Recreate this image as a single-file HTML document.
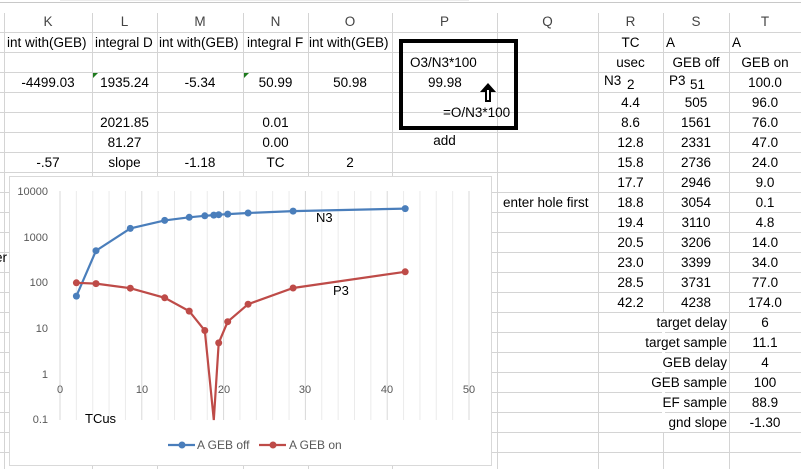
<!DOCTYPE html>
<html><head><meta charset="utf-8"><style>
*{margin:0;padding:0;box-sizing:border-box}
body{width:801px;height:469px;overflow:hidden;background:#fff;font-family:"Liberation Sans",sans-serif;font-size:13.5px;color:#000;position:relative}
.t{position:absolute;white-space:nowrap;line-height:20px;height:20px}
.c{text-align:center}.r{text-align:right}
.h{color:#444}
.vl{position:absolute;width:1px;background:#d4d4d4}
.hl{position:absolute;height:1px;background:#d4d4d4}
</style></head><body>
<div id="g"></div>
<div class="hl" style="left:0;top:2px;width:801px;background:#c8c8c8"></div>
<script>
var g=document.getElementById('g'),h='';
var cols=[4,92,157,243,308,392,497,598,663,729];
for(var i=0;i<cols.length;i++){h+='<div class="vl" style="left:'+cols[i]+'px;top:13px;height:456px"></div>';}
for(var y=32;y<469;y+=20){h+='<div class="hl" style="left:0;top:'+y+'px;width:801px"></div>';}
h+='<div style="position:absolute;left:662px;top:313px;width:3px;height:119px;background:#fff"></div>';
g.innerHTML=h;
</script>
<div class="t c h" style="left:4px;top:12px;width:88px">K</div>
<div class="t c h" style="left:92px;top:12px;width:65px">L</div>
<div class="t c h" style="left:157px;top:12px;width:86px">M</div>
<div class="t c h" style="left:243px;top:12px;width:65px">N</div>
<div class="t c h" style="left:308px;top:12px;width:84px">O</div>
<div class="t c h" style="left:392px;top:12px;width:105px">P</div>
<div class="t c h" style="left:497px;top:12px;width:101px">Q</div>
<div class="t c h" style="left:598px;top:12px;width:65px">R</div>
<div class="t c h" style="left:663px;top:12px;width:66px">S</div>
<div class="t c h" style="left:729px;top:12px;width:72px">T</div>
<div class="t" style="left:7px;top:33px">int with(GEB)</div>
<div class="t" style="left:95px;top:33px">integral D</div>
<div class="t" style="left:159px;top:33px">int with(GEB)</div>
<div class="t" style="left:247px;top:33px">integral F</div>
<div class="t" style="left:309px;top:33px">int with(GEB)</div>
<div class="t c" style="left:598px;top:33px;width:65px">TC</div>
<div class="t" style="left:666px;top:33px">A</div>
<div class="t" style="left:732px;top:33px">A</div>
<div class="t c" style="left:598px;top:53px;width:65px">usec</div>
<div class="t c" style="left:663px;top:53px;width:66px">GEB off</div>
<div class="t c" style="left:729px;top:53px;width:72px">GEB on</div>
<div class="t c" style="left:4px;top:73px;width:88px">-4499.03</div>
<div class="t c" style="left:92px;top:73px;width:65px">1935.24</div>
<div class="t c" style="left:157px;top:73px;width:86px">-5.34</div>
<div class="t c" style="left:243px;top:73px;width:65px">50.99</div>
<div class="t c" style="left:308px;top:73px;width:84px">50.98</div>
<div style="position:absolute;left:93px;top:73px;width:0;height:0;border-top:5px solid #1e7b1e;border-right:5px solid transparent"></div>
<div style="position:absolute;left:244px;top:73px;width:0;height:0;border-top:5px solid #1e7b1e;border-right:5px solid transparent"></div>
<div class="t c" style="left:92px;top:113px;width:65px">2021.85</div>
<div class="t c" style="left:243px;top:113px;width:65px">0.01</div>
<div class="t c" style="left:92px;top:133px;width:65px">81.27</div>
<div class="t c" style="left:243px;top:133px;width:65px">0.00</div>
<div class="t c" style="left:4px;top:153px;width:88px">-.57</div>
<div class="t c" style="left:92px;top:153px;width:65px">slope</div>
<div class="t c" style="left:157px;top:153px;width:86px">-1.18</div>
<div class="t c" style="left:243px;top:153px;width:65px">TC</div>
<div class="t c" style="left:308px;top:153px;width:84px">2</div>
<div style="position:absolute;left:399px;top:39px;width:119px;height:91px;border:4px solid #000"></div>
<div class="t" style="left:410px;top:53px">O3/N3*100</div>
<div class="t" style="left:428px;top:73px">99.98</div>
<div class="t" style="left:443px;top:103px">=O/N3*100</div>
<svg style="position:absolute;left:478px;top:82px" width="20" height="22" viewBox="0 0 20 22"><path d="M10 1 L18 10 L13 10 L13 20 L7 20 L7 10 L2 10 Z" fill="#000"/><path d="M9 8 L11 8 L11 18 L9 18 Z" fill="#fff"/></svg>
<div class="t c" style="left:392px;top:131px;width:105px">add</div>
<div id="d"></div>
<script>
var R=[["","","100.0"],["4.4","505","96.0"],["8.6","1561","76.0"],["12.8","2331","47.0"],["15.8","2736","24.0"],["17.7","2946","9.0"],["18.8","3054","0.1"],["19.4","3110","4.8"],["20.5","3206","14.0"],["23.0","3399","34.0"],["28.5","3731","77.0"],["42.2","4238","174.0"]];
var s='';
for(var i=0;i<R.length;i++){var y=73+20*i;
s+='<div class="t c" style="left:598px;top:'+y+'px;width:65px">'+R[i][0]+'</div>';
s+='<div class="t c" style="left:663px;top:'+y+'px;width:66px">'+R[i][1]+'</div>';
s+='<div class="t c" style="left:729px;top:'+y+'px;width:72px">'+R[i][2]+'</div>';}
var B=[["target delay","6"],["target sample","11.1"],["GEB delay","4"],["GEB sample","100"],["EF sample","88.9"],["gnd slope","-1.30"]];
for(var i=0;i<B.length;i++){var y=313+20*i;
s+='<div class="t r" style="left:598px;top:'+y+'px;width:129px">'+B[i][0]+'</div>';
s+='<div class="t c" style="left:729px;top:'+y+'px;width:72px">'+B[i][1]+'</div>';}
document.getElementById('d').innerHTML=s;
</script>
<div class="t" style="left:604px;top:71px">N3</div>
<div class="t" style="left:627px;top:75px">2</div>
<div class="t" style="left:669px;top:71px">P3</div>
<div class="t" style="left:690px;top:75px">51</div>
<div class="t" style="left:503px;top:193px">enter hole first</div>
<div class="t" style="left:-5px;top:248px">er</div>
<svg style="position:absolute;left:0;top:0" width="801" height="469">
<rect x="9.5" y="176.5" width="482" height="289" fill="#fff" stroke="#d9d9d9"/>
<g id="grid"></g>
<g font-family="Liberation Sans" font-size="11" fill="#595959" text-anchor="end">
<text x="48" y="195">10000</text><text x="48" y="241">1000</text><text x="48" y="286">100</text><text x="48" y="332">10</text><text x="48" y="378">1</text><text x="48" y="423">0.1</text>
</g>
<g font-family="Liberation Sans" font-size="11" fill="#595959" text-anchor="middle">
<text x="60" y="393">0</text><text x="142" y="393">10</text><text x="224" y="393">20</text><text x="305" y="393">30</text><text x="387" y="393">40</text><text x="469" y="393">50</text>
</g>
<polyline fill="none" stroke="#4a7ebb" stroke-width="2.2" points="76.4,296.1 96,250.7 130.3,228.4 164.7,220.4 189.2,217.3 204.8,215.8 213.8,215.1 218.7,214.7 227.7,214.1 248.1,213 293.1,211.1 405.2,208.6"/>
<g fill="#4a7ebb"><circle cx="76.4" cy="296.1" r="3.5"/><circle cx="96" cy="250.7" r="3.5"/><circle cx="130.3" cy="228.4" r="3.5"/><circle cx="164.7" cy="220.4" r="3.5"/><circle cx="189.2" cy="217.3" r="3.5"/><circle cx="204.8" cy="215.8" r="3.5"/><circle cx="213.8" cy="215.1" r="3.5"/><circle cx="218.7" cy="214.7" r="3.5"/><circle cx="227.7" cy="214.1" r="3.5"/><circle cx="248.1" cy="213" r="3.5"/><circle cx="293.1" cy="211.1" r="3.5"/><circle cx="405.2" cy="208.6" r="3.5"/></g>
<polyline fill="none" stroke="#be4b48" stroke-width="2.2" points="76.4,282.8 96,283.6 130.3,288.2 164.7,297.8 189.2,311.1 204.8,330.5 213.8,420 218.7,342.9 227.7,321.7 248.1,304.2 293.1,288 405.2,271.8"/>
<g fill="#be4b48"><circle cx="76.4" cy="282.8" r="3.5"/><circle cx="96" cy="283.6" r="3.5"/><circle cx="130.3" cy="288.2" r="3.5"/><circle cx="164.7" cy="297.8" r="3.5"/><circle cx="189.2" cy="311.1" r="3.5"/><circle cx="204.8" cy="330.5" r="3.5"/><circle cx="218.7" cy="342.9" r="3.5"/><circle cx="227.7" cy="321.7" r="3.5"/><circle cx="248.1" cy="304.2" r="3.5"/><circle cx="293.1" cy="288" r="3.5"/><circle cx="405.2" cy="271.8" r="3.5"/></g>
<g font-family="Liberation Sans" font-size="13" fill="#000">
<text x="316" y="222">N3</text><text x="333" y="295">P3</text><text x="85" y="423">TCus</text>
</g>
<line x1="168" y1="445" x2="195" y2="445" stroke="#4a7ebb" stroke-width="2.2"/><circle cx="182" cy="445" r="3.5" fill="#4a7ebb"/>
<line x1="259" y1="445" x2="286" y2="445" stroke="#be4b48" stroke-width="2.2"/><circle cx="273" cy="445" r="3.5" fill="#be4b48"/>
<g font-family="Liberation Sans" font-size="12" fill="#595959"><text x="197" y="449">A  GEB off</text><text x="289" y="449">A  GEB on</text></g>
</svg>
<script>
var gg='',top=191.4,d=45.6;
for(var k=0;k<5;k++){for(var m=2;m<10;m++){var y=top+d*(k+1)-d*Math.log10(m);gg+='<line x1="60" x2="469" y1="'+y+'" y2="'+y+'" stroke="#ebebeb"/>';}}
for(var x=2;x<50;x+=2){if(x%10){var px=60+8.18*x;gg+='<line x1="'+px+'" x2="'+px+'" y1="191" y2="420" stroke="#ebebeb"/>';}}
for(var k=0;k<6;k++){var y=top+d*k;gg+='<line x1="60" x2="469" y1="'+y+'" y2="'+y+'" stroke="'+(k==4?'#bfbfbf':'#d9d9d9')+'"/>';}
for(var x=0;x<=50;x+=10){var px=60+8.18*x;gg+='<line x1="'+px+'" x2="'+px+'" y1="191" y2="420" stroke="#d9d9d9"/>';}
document.getElementById('grid').innerHTML=gg;
</script>
</body></html>
